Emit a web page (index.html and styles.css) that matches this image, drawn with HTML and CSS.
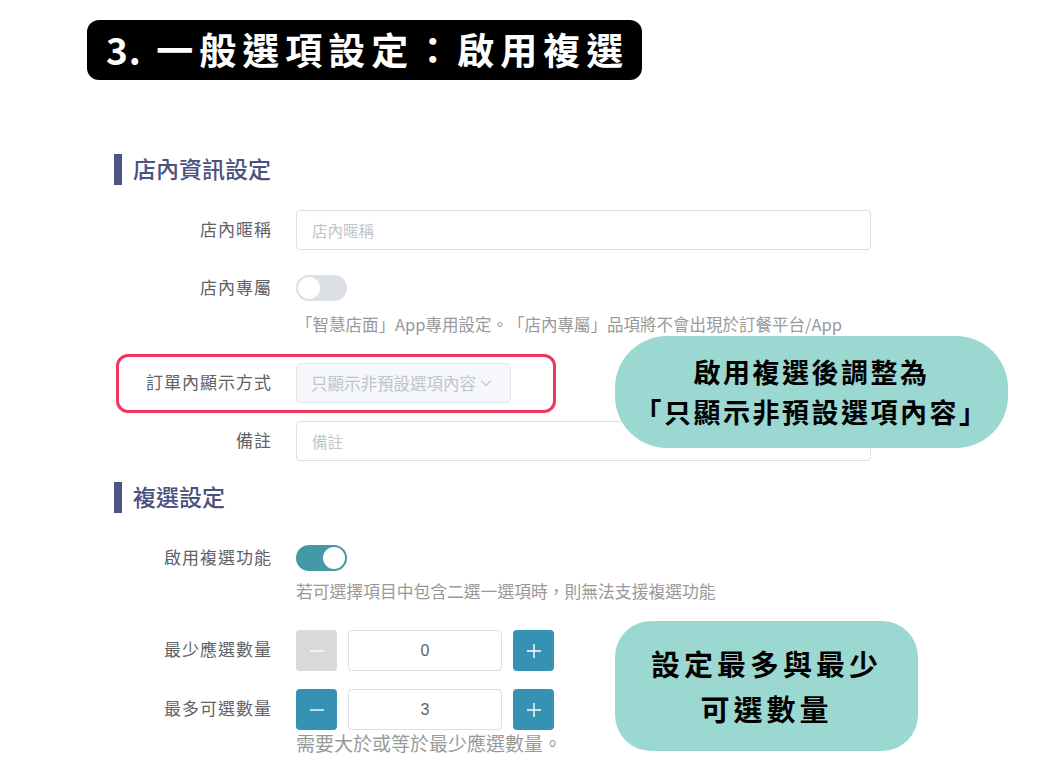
FILE: index.html
```html
<!doctype html>
<html>
<head>
    <meta charset="utf-8">
    <title>一般選項設定：啟用複選</title>
    <link rel="stylesheet" href="styles.css">
</head>
<body>
    <h1 class="step-title"><span class="step-no">3.</span> 一般選項設定：啟用複選</h1>

    <div class="panel">
        <h2 class="section-title"><span>店內資訊設定</span></h2>

        <div class="form-row first">
            <label class="form-label">店內暱稱</label>
            <input class="text-input" type="text" placeholder="店內暱稱">
        </div>
        <div class="form-row">
            <label class="form-label">店內專屬</label>
            <span class="switch"></span>
        </div>
        <div class="hint">「智慧店面」App專用設定。「店內專屬」品項將不會出現於訂餐平台/App</div>

        <div class="form-row spaced highlighted">
            <label class="form-label">訂單內顯示方式</label>
            <div class="select disabled">
                <span>只顯示非預設選項內容</span>
                <svg class="chevron" viewBox="0 0 12 12" width="12" height="12">
                    <path d="M1.5 4 L6 8.5 L10.5 4" fill="none" stroke="#c0c4cc" stroke-width="1.2"/>
                </svg>
            </div>
        </div>
        <div class="form-row">
            <label class="form-label">備註</label>
            <input class="text-input" type="text" placeholder="備註">
        </div>

        <h2 class="section-title second"><span>複選設定</span></h2>

        <div class="form-row first">
            <label class="form-label">啟用複選功能</label>
            <span class="switch on"></span>
        </div>
        <div class="hint tight">若可選擇項目中包含二選一選項時，則無法支援複選功能</div>

        <div class="form-row spaced">
            <label class="form-label">最少應選數量</label>
            <div class="stepper">
                <button class="step-btn" disabled>
                    <svg viewBox="0 0 16 16" width="16" height="16"><path d="M1 8 H15" stroke="#fff" stroke-width="1.4"/></svg>
                </button>
                <input class="step-value" type="text" value="0">
                <button class="step-btn">
                    <svg viewBox="0 0 16 16" width="16" height="16"><path d="M1 8 H15 M8 1 V15" stroke="#fff" stroke-width="1.4"/></svg>
                </button>
            </div>
        </div>
        <div class="form-row">
            <label class="form-label">最多可選數量</label>
            <div class="stepper">
                <button class="step-btn">
                    <svg viewBox="0 0 16 16" width="16" height="16"><path d="M1 8 H15" stroke="#fff" stroke-width="1.4"/></svg>
                </button>
                <input class="step-value" type="text" value="3">
                <button class="step-btn">
                    <svg viewBox="0 0 16 16" width="16" height="16"><path d="M1 8 H15 M8 1 V15" stroke="#fff" stroke-width="1.4"/></svg>
                </button>
            </div>
        </div>
        <div class="hint big">需要大於或等於最少應選數量。</div>
    </div>

    <div class="callout callout-display">啟用複選後調整為<br>「只顯示非預設選項內容」</div>
    <div class="callout callout-count">設定最多與最少<br>可選數量</div>
</body>
</html>
```

FILE: styles.css
```css
body {
    margin: 0;
    padding: 0;
    background-color: #fff;
    font-family: "Noto Sans CJK TC", "Noto Sans", sans-serif;
    text-spacing-trim: space-all;
    width: 1040px;
    height: 780px;
    overflow: hidden;
    position: relative;
}
.step-title {
    display: inline-block;
    margin: 20px 0 0 87px;
    height: 60px;
    line-height: 58px;
    padding: 0 13px 0 19px;
    background-color: #000;
    color: #fff;
    border-radius: 12px;
    font-size: 37px;
    font-weight: 700;
    letter-spacing: 6px;
}
.step-no {
    letter-spacing: 1px;
}
.panel {
    margin-left: 114px;
    width: 757px;
}
.section-title {
    display: flex;
    align-items: flex-start;
    gap: 11px;
    height: 31px;
    margin: 74px 0 0 0;
    font-size: 23px;
    line-height: 28px;
    font-weight: 500;
    color: #4b5180;
}
.section-title::before {
    content: "";
    flex: none;
    width: 8px;
    height: 31px;
    background-color: #4f5687;
}
.section-title.second {
    margin-top: 21px;
}
.form-row {
    display: grid;
    grid-template-columns: 158px 1fr;
    column-gap: 24px;
    align-items: center;
    min-height: 40px;
    margin-top: 18px;
}
.form-row.first {
    margin-top: 25px;
}
.form-row.spaced {
    margin-top: 29px;
}
.form-label {
    text-align: right;
    font-size: 17px;
    line-height: 22px;
    padding-bottom: 3px;
    letter-spacing: 1px;
    color: #606266;
}
.text-input {
    box-sizing: border-box;
    width: 575px;
    height: 40px;
    padding: 0 15px;
    border: 1px solid #dcdfe6;
    border-radius: 4px;
    font-family: inherit;
    font-size: 15.5px;
    color: #606266;
    outline: none;
}
.text-input::placeholder {
    color: #c0c4cc;
}
.switch {
    position: relative;
    display: block;
    width: 51px;
    height: 26px;
    border-radius: 13px;
    background-color: #dcdfe6;
}
.switch::after {
    content: "";
    position: absolute;
    top: 2px;
    left: 2px;
    width: 22px;
    height: 22px;
    border-radius: 50%;
    background-color: #fff;
}
.switch.on {
    background-color: #4399a8;
}
.switch.on::after {
    left: 27px;
}
.hint {
    margin: 6px 0 0 182px;
    font-size: 16.5px;
    line-height: 20px;
    color: #999;
}
.hint.tight {
    margin-top: 3px;
    font-size: 16.8px;
}
.hint.big {
    margin-top: 3px;
    font-size: 19px;
}
.select {
    box-sizing: border-box;
    display: flex;
    align-items: center;
    gap: 4px;
    width: 215px;
    height: 40px;
    padding: 0 14px;
    border: 1px solid #e4e7ed;
    border-radius: 4px;
    background-color: #f5f7fa;
    font-size: 16.5px;
    color: #c0c4cc;
    white-space: nowrap;
}
.highlighted {
    position: relative;
}
.highlighted::after {
    content: "";
    position: absolute;
    top: -9px;
    bottom: -10px;
    left: 2px;
    width: 440px;
    box-sizing: border-box;
    border: 3px solid #f0375b;
    border-radius: 12px;
}
.stepper {
    display: flex;
    align-items: center;
    gap: 11px;
}
.step-btn {
    display: flex;
    align-items: center;
    justify-content: center;
    width: 41px;
    height: 41px;
    padding: 0;
    border: none;
    border-radius: 4px;
    background-color: #3592b3;
}
.step-btn:disabled {
    background-color: #d9d9d9;
}
.step-value {
    box-sizing: border-box;
    width: 154px;
    height: 41px;
    border: 1px solid #dcdfe6;
    border-radius: 4px;
    text-align: center;
    font-family: "Liberation Sans", sans-serif;
    font-size: 16px;
    color: #606266;
    outline: none;
}
.callout {
    position: absolute;
    display: flex;
    align-items: center;
    justify-content: center;
    text-align: center;
    background-color: #9cd8d2;
    color: #000;
    font-weight: 700;
}
.callout-display {
    left: 615px;
    top: 336px;
    width: 393px;
    height: 112px;
    border-radius: 52px;
    font-size: 27px;
    line-height: 40px;
    letter-spacing: 2.5px;
}
.callout-count {
    left: 615px;
    top: 621px;
    width: 303px;
    height: 130px;
    border-radius: 36px;
    font-size: 29px;
    line-height: 45px;
    letter-spacing: 4px;
}
```
